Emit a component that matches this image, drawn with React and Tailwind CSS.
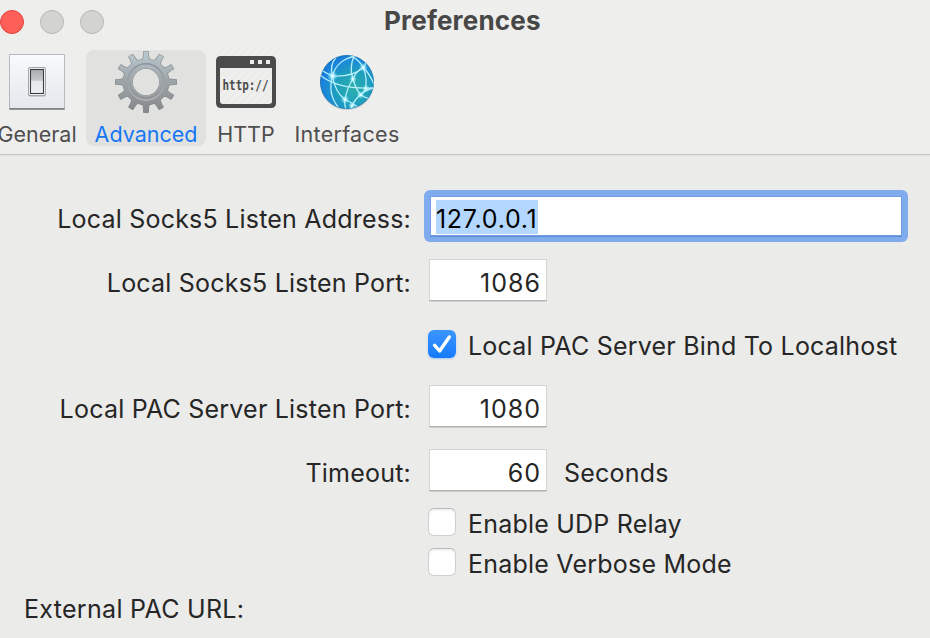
const TEETH = [0, 30, 60, 90, 120, 150, 180, 210, 240, 270, 300, 330];

function SwitchIcon() {
  return (
    <svg width="64" height="64" viewBox="0 0 64 64" className="block shrink-0">
      <defs>
        <linearGradient id="plate" x1="0" y1="0" x2="0" y2="1">
          <stop offset="0" stopColor="#f9fafc" />
          <stop offset="1" stopColor="#e4e7ec" />
        </linearGradient>
        <linearGradient id="rocker" x1="0" y1="0" x2="0" y2="1">
          <stop offset="0" stopColor="#a9abad" />
          <stop offset="0.45" stopColor="#c6c8ca" />
          <stop offset="0.5" stopColor="#e6e9ec" />
          <stop offset="1" stopColor="#eceff2" />
        </linearGradient>
      </defs>
      <rect x="4" y="4" width="56" height="56" rx="1" fill="#b5b8bc" />
      <rect x="4.5" y="58" width="55" height="1.7" fill="#7f8386" />
      <rect x="5" y="5" width="54" height="53" fill="url(#plate)" />
      <rect x="23" y="17" width="18" height="29.5" rx="2" fill="#a4a7aa" />
      <rect x="24" y="18" width="16" height="27" rx="1.5" fill="#f4f5f6" />
      <rect x="25.5" y="19.5" width="13" height="24" fill="url(#rocker)" stroke="#3b3d3f" strokeWidth="1.1" />
    </svg>
  );
}

function GearIcon() {
  return (
    <svg width="64" height="64" viewBox="0 0 64 64" className="block shrink-0">
      <defs>
        <linearGradient id="metal" gradientUnits="userSpaceOnUse" x1="0" y1="1" x2="0" y2="63">
          <stop offset="0" stopColor="#bccad1" />
          <stop offset="0.5" stopColor="#9da4a8" />
          <stop offset="1" stopColor="#858789" />
        </linearGradient>
        <linearGradient id="rim" x1="0" y1="0" x2="0" y2="1">
          <stop offset="0" stopColor="#87939a" />
          <stop offset="1" stopColor="#b0b3b5" />
        </linearGradient>
        <mask id="gearShape">
          <g fill="#fff">
            <circle cx="32" cy="32" r="23.5" />
            {TEETH.map((a) => (
              <path key={a} transform={`rotate(${a} 32 32)`} d="M26.7 11 Q29 8.5 29 5 L29 2.2 Q29 1 30.2 1 L33.8 1 Q35 1 35 2.2 L35 5 Q35 8.5 37.3 11 Z" />
            ))}
          </g>
          <circle cx="32" cy="32" r="13.2" fill="#000" />
        </mask>
        <mask id="gearInner">
          <g fill="#fff">
            <circle cx="32" cy="32" r="22.9" />
            {TEETH.map((a) => (
              <path key={a} transform={`rotate(${a} 32 32)`} d="M27.4 11.5 Q29.6 9 29.6 5 L29.6 1.6 L34.4 1.6 L34.4 5 Q34.4 9 36.6 11.5 Z" />
            ))}
          </g>
          <circle cx="32" cy="32" r="13.8" fill="#000" />
        </mask>
      </defs>
      <rect width="64" height="64" fill="#82898c" mask="url(#gearShape)" />
      <rect width="64" height="64" fill="url(#metal)" mask="url(#gearInner)" />
      <circle cx="32" cy="32" r="18.2" fill="none" stroke="url(#rim)" strokeWidth="1.4" />
      <circle cx="32" cy="32" r="14.2" fill="none" stroke="#a9b0b4" strokeWidth="0.8" />
    </svg>
  );
}

function HttpIcon() {
  return (
    <svg width="64" height="64" viewBox="0 0 64 64" className="block shrink-0">
      <defs>
        <pattern id="hatch" width="8" height="8" patternUnits="userSpaceOnUse">
          <path d="M-1 9 L9 -1 M-1 1 L1 -1 M7 9 L9 7" stroke="#e3e3e1" strokeWidth="0.8" />
        </pattern>
      </defs>
      <rect width="64" height="64" fill="url(#hatch)" />
      <path
        fillRule="evenodd"
        fill="#4b4b4b"
        d="M7 6 H57 Q62 6 62 11 V53 Q62 58 57 58 H7 Q2 58 2 53 V11 Q2 6 7 6 Z M6 18 V51 Q6 54 9 54 H55 Q58 54 58 51 V18 Z M36 10 V14 H40 V10 Z M44 10 V14 H48 V10 Z M52 10 V14 H56 V10 Z"
      />
      <text
        x="8.5"
        y="40"
        textLength="46"
        lengthAdjust="spacingAndGlyphs"
        fill="#4b4b4b"
        className="font-['DejaVu_Sans_Mono',monospace] text-[14px] font-bold"
      >
        http://
      </text>
    </svg>
  );
}

function GlobeIcon() {
  return (
    <svg width="64" height="64" viewBox="0 0 64 64" className="block shrink-0">
      <defs>
        <radialGradient id="sea" cx="0.62" cy="0.62" r="0.7">
          <stop offset="0" stopColor="#2bb0ad" />
          <stop offset="0.45" stopColor="#1f9fbb" />
          <stop offset="0.8" stopColor="#1a86dc" />
          <stop offset="1" stopColor="#1672d2" />
        </radialGradient>
        <radialGradient id="spark">
          <stop offset="0" stopColor="#fff" />
          <stop offset="0.35" stopColor="#c5f8ff" stopOpacity="0.75" />
          <stop offset="1" stopColor="#6fe0ff" stopOpacity="0" />
        </radialGradient>
        <clipPath id="disc">
          <circle cx="32" cy="32" r="26.6" />
        </clipPath>
      </defs>
      <ellipse cx="32" cy="33.3" rx="26.8" ry="26.8" fill="#b4bcc0" opacity="0.7" />
      <circle cx="32" cy="32" r="27" fill="#1c77ae" />
      <circle cx="32" cy="32" r="26.4" fill="url(#sea)" />
      <g clipPath="url(#disc)" fill="none" stroke="#b9effa" strokeWidth="1.3" strokeLinecap="round">
        <path d="M17.5 26 C15.5 19 17 12 21 7.5" />
        <path d="M17.5 26 C20 15 29 8 41 6" />
        <path d="M5 19 Q10 23 17.5 26 Q38 27 48.3 17.5 Q51 14 51 11" />
        <path d="M5 25 C18 36 36 39 59 38" />
        <path d="M17.5 26 C14 38 16 48 23 57" />
        <path d="M17.5 26 Q20 42 30 49.5 Q38 53 44 58" />
        <path d="M39 6 Q34 18 38 29 Q41 40 46 45 Q50 48 56 49" />
        <path d="M35 5 Q44 10 48.3 17.5 Q54 23 59 34" />
        <path d="M48.3 17.5 Q41 21 38 29 Q32 38 30 49.5 Q29 54 31 59" />
        <path d="M48.3 17.5 Q53 30 50 40 L46 45" />
        <path d="M59 38 Q49 40 43 47 Q38 52 36 59" />
      </g>
      <g fill="url(#spark)">
        <circle cx="17.5" cy="26" r="5.5" />
        <circle cx="48.3" cy="17.5" r="4.5" />
        <circle cx="38" cy="29" r="4" />
        <circle cx="30" cy="49.5" r="4.5" />
        <circle cx="45.5" cy="45" r="4" />
        <circle cx="51" cy="38.5" r="4" />
        <circle cx="37" cy="55.5" r="4" />
      </g>
    </svg>
  );
}

function Tab({ icon, label, className = "", labelClass = "text-[#4f4f4f]" }) {
  return (
    <div className={`flex h-24 shrink-0 flex-col items-center rounded-lg ${className}`}>
      {icon}
      <span className={`mt-1.5 text-[21.5px] leading-7 ${labelClass}`}>{label}</span>
    </div>
  );
}

function NumberField({ value }) {
  return (
    <div className="flex h-[42px] w-[118px] justify-end border border-[#d5d5d4] border-b-[#b0b0af] bg-white pt-[9px] pr-[5px] leading-7 tracking-[1px] shadow-[0_1px_0_#cfcfce]">
      {value}
    </div>
  );
}

function Label({ children, className = "" }) {
  return <div className={`w-[411px] shrink-0 text-right ${className}`}>{children}</div>;
}

function Checkbox({ checked }) {
  if (checked) {
    return (
      <span className="flex size-7 shrink-0 rounded-md bg-linear-to-b from-[#3a95fd] to-[#147bfb] shadow-[0_1px_2px_rgba(20,123,251,0.3)]">
        <svg width="28" height="28" viewBox="0 0 28 28" className="block">
          <path d="M6.5 15.2 L11.6 21 L21.3 7" fill="none" stroke="#fff" strokeWidth="3.4" strokeLinecap="round" strokeLinejoin="round" />
        </svg>
      </span>
    );
  }
  return <span className="size-7 shrink-0 rounded-md border border-[#cfcfce] border-t-[#b9b9b8] bg-white shadow-[inset_0_2px_2px_rgba(0,0,0,0.06)]" />;
}

function CheckRow({ checked, label, className = "" }) {
  return (
    <div className={`flex h-7 pl-[428px] ${className}`}>
      <Checkbox checked={checked} />
      <span className="ml-3 pt-0.5 leading-7">{label}</span>
    </div>
  );
}

export default function App() {
  return (
    <div className="h-[638px] w-[930px] overflow-hidden bg-[#ebebe9] font-[Inter,sans-serif] text-[25px] tracking-[0.21px] whitespace-nowrap text-[#262626]">
      <header className="h-[156px] border-b border-[#e3e3e1] bg-[#eeeeec]">
        <div className="h-[155px] border-b border-[#c6c6c4]">
          <div className="flex h-[50px]">
            <div className="flex w-[384px] gap-4 pt-2.5">
              <span className="size-6 rounded-full border border-[#e0443f] bg-[#fe5f58]" />
              <span className="size-6 rounded-full border border-[#b6b6b4] bg-[#d3d3d1]" />
              <span className="size-6 rounded-full border border-[#b6b6b4] bg-[#d3d3d1]" />
            </div>
            <h1 className="pt-[7px] text-[26px] leading-7 font-bold tracking-[0.2px] text-[#474747]">Preferences</h1>
          </div>
          <nav className="flex tracking-normal">
            <Tab icon={<SwitchIcon />} label="General" className="-ml-[5px] w-[84px]" />
            <Tab icon={<GearIcon />} label="Advanced" className="ml-[7px] w-[120px] bg-[#e1e1df]" labelClass="text-[#1577f5]" />
            <Tab icon={<HttpIcon />} label="HTTP" className="w-20" />
            <Tab icon={<GlobeIcon />} label="Interfaces" className="w-[122px]" labelClass="text-[#4f4f4f] tracking-[0.3px]" />
          </nav>
        </div>
      </header>

      <main className="pt-[34px]">
        <div className="flex h-[52px]">
          <Label className="pt-[15px] leading-7">Local Socks5 Listen Address:</Label>
          <div className="ml-[13px] h-[52px] w-[484px] rounded-md bg-[#80abed] p-[6px]">
            <div className="h-10 border border-[#719fe5] bg-white pt-[3px] pl-[5px] shadow-[0_1px_0_#5e8fd5]">
              <span className="inline-block h-[34px] w-[102px] bg-[#b3d7ff] pt-[5px] leading-7 tracking-[0.7px] text-black">127.0.0.1</span>
            </div>
          </div>
        </div>

        <div className="mt-[17px] flex h-[43px] gap-[18px]">
          <Label className="pt-[10px] leading-7">Local Socks5 Listen Port:</Label>
          <NumberField value="1086" />
        </div>

        <CheckRow checked label="Local PAC Server Bind To Localhost" className="mt-7" />

        <div className="mt-[27px] flex h-[43px] gap-[18px]">
          <Label className="pt-[10px] leading-7">Local PAC Server Listen Port:</Label>
          <NumberField value="1080" />
        </div>

        <div className="mt-[21px] flex h-[43px]">
          <Label className="mr-[18px] pt-[10px] leading-7">Timeout:</Label>
          <NumberField value="60" />
          <span className="ml-[17px] pt-[10px] leading-7">Seconds</span>
        </div>

        <CheckRow label="Enable UDP Relay" className="mt-4" />
        <CheckRow label="Enable Verbose Mode" className="mt-3" />

        <div className="mt-[19px] pl-6 leading-7 tracking-[0.3px]">External PAC URL:</div>
      </main>
    </div>
  );
}
